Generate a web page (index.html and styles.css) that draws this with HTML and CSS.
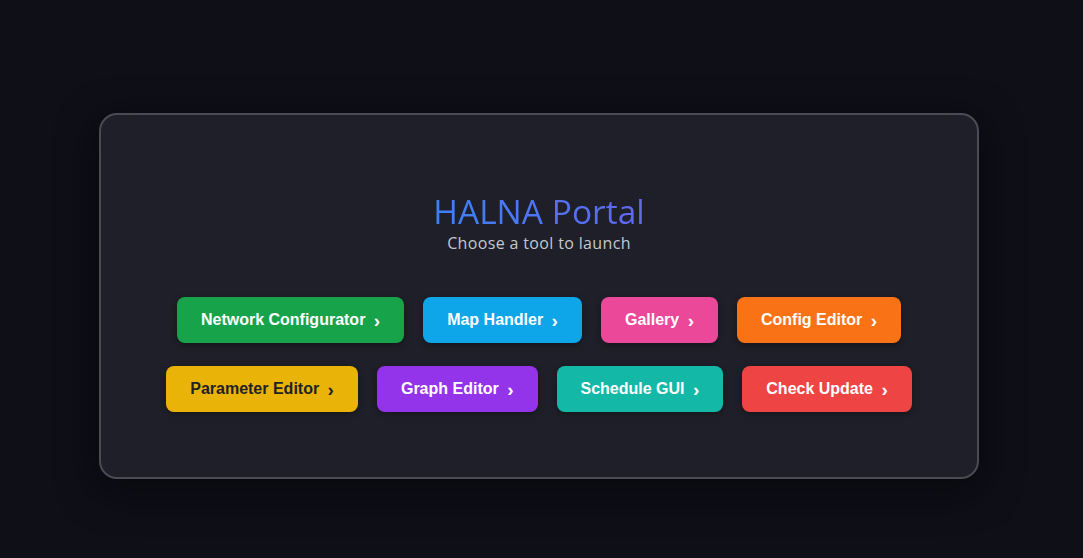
FILE: index.html
```html
<!DOCTYPE html>
<html lang="en">
<head>
<meta charset="utf-8">
<title>HALNA Portal</title>
<link rel="stylesheet" href="styles.css">
</head>
<body>
<main class="card">
  <h1 class="title">HALNA Portal</h1>
  <p class="subtitle">Choose a tool to launch</p>
  <div class="tools">
    <div class="row">
      <a class="btn green" href="#">Network Configurator <span class="chev">›</span></a>
      <a class="btn sky" href="#">Map Handler <span class="chev">›</span></a>
      <a class="btn pink" href="#">Gallery <span class="chev">›</span></a>
      <a class="btn orange" href="#">Config Editor <span class="chev">›</span></a>
    </div>
    <div class="row">
      <a class="btn yellow" href="#">Parameter Editor <span class="chev">›</span></a>
      <a class="btn purple" href="#">Graph Editor <span class="chev">›</span></a>
      <a class="btn teal" href="#">Schedule GUI <span class="chev">›</span></a>
      <a class="btn red" href="#">Check Update <span class="chev">›</span></a>
    </div>
  </div>
</main>
</body>
</html>
```
FILE: styles.css
```css
html, body {
  margin: 0;
  height: 100%;
}
body {
  background: #0e0f17;
  display: flex;
  justify-content: center;
  align-items: flex-start;
  padding: 113px 5px 0 0;
  box-sizing: border-box;
  font-family: "Open Sans", "Noto Sans", sans-serif;
}
.card {
  box-sizing: border-box;
  width: 880px;
  height: 366px;
  background: #1e1f28;
  border: 2px solid #4a4b55;
  border-radius: 18px;
  box-shadow: 0 10px 40px rgba(0, 0, 0, 0.5);
  padding-top: 74px;
  display: flex;
  flex-direction: column;
  align-items: center;
}
.title {
  margin: 0;
  font-size: 33.5px;
  font-weight: 500;
  line-height: 44px;
  background: linear-gradient(90deg, #3b82f6, #6366f1);
  -webkit-background-clip: text;
  background-clip: text;
  color: transparent;
}
.subtitle {
  margin: 0;
  font-size: 16px;
  line-height: 20px;
  letter-spacing: 0.35px;
  color: #c4c7d2;
}
.tools {
  margin-top: 44px;
  display: flex;
  flex-direction: column;
  align-items: center;
  gap: 23px;
}
.row {
  display: flex;
  gap: 19px;
}
.btn {
  display: flex;
  align-items: center;
  height: 46px;
  box-sizing: border-box;
  padding: 0 24px;
  border-radius: 8px;
  font-family: "Liberation Sans", Arial, sans-serif;
  font-weight: 700;
  font-size: 16px;
  color: #ffffff;
  text-decoration: none;
  white-space: pre;
  box-shadow: 0 2px 6px rgba(0, 0, 0, 0.3);
}
.chev {
  font-size: 19px;
  margin-left: 4px;
  position: relative;
  top: 1px;
}
.green { background: #17a34a; }
.sky { background: #0ea5e9; }
.pink { background: #ec4899; }
.orange { background: #f97316; }
.yellow { background: #eab308; color: #1f2128; }
.purple { background: #9333ea; }
.teal { background: #14b8a6; }
.red { background: #ef4444; }
```
